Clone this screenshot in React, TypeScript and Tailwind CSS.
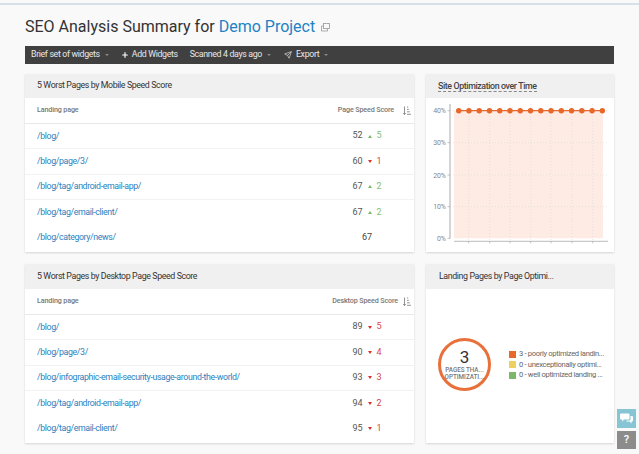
import { Plus, Send } from "lucide-react";

type Row = { page: string; score: number; dir?: "up" | "down"; delta?: number };

const mobileRows: Row[] = [
  { page: "/blog/", score: 52, dir: "up", delta: 5 },
  { page: "/blog/page/3/", score: 60, dir: "down", delta: 1 },
  { page: "/blog/tag/android-email-app/", score: 67, dir: "up", delta: 2 },
  { page: "/blog/tag/email-client/", score: 67, dir: "up", delta: 2 },
  { page: "/blog/category/news/", score: 67 },
];

const desktopRows: Row[] = [
  { page: "/blog/", score: 89, dir: "down", delta: 5 },
  { page: "/blog/page/3/", score: 90, dir: "down", delta: 4 },
  { page: "/blog/infographic-email-security-usage-around-the-world/", score: 93, dir: "down", delta: 3 },
  { page: "/blog/tag/android-email-app/", score: 94, dir: "down", delta: 2 },
  { page: "/blog/tag/email-client/", score: 95, dir: "down", delta: 1 },
];

function Caret() {
  return <span className="ml-[5px] inline-block h-0 w-0 border-x-[2.5px] border-t-[2.5px] border-x-transparent border-t-[#8a8a8a]" />;
}

function Delta({ row }: { row: Row }) {
  if (!row.dir) return null;
  const up = row.dir === "up";
  return (
    <span className="ml-[5px] flex items-center gap-[5px]">
      {up ? (
        <span className="h-0 w-0 border-x-[2.5px] border-b-[3px] border-x-transparent border-b-[#7cb866]" />
      ) : (
        <span className="h-0 w-0 border-x-[2.5px] border-t-[3px] border-x-transparent border-t-[#d9322e]" />
      )}
      <span className={up ? "w-[5px] text-[#86bd6f]" : "w-[5px] text-[#d9453f]"}>{row.delta}</span>
    </span>
  );
}

function SortIcon() {
  return (
    <svg width="8" height="9" viewBox="0 0 8 9" className="ml-[5px] shrink-0" fill="none" stroke="#777" strokeWidth="0.8">
      <path d="M1.5 0.5V8.5M0.3 7L1.5 8.6L2.7 7" />
      <path d="M4 1H5.2M4 3.4H5.8M4 5.8H6.8M4 8.3H8" />
    </svg>
  );
}

function TableCard({ title, column, rows, titleH, colGap }: { title: string; column: string; rows: Row[]; titleH: string; colGap: string }) {
  return (
    <div className="bg-white shadow-[0_1px_2px_rgba(0,0,0,0.15)]">
      <div className={`flex items-center bg-[#f0f0f0] pl-[12px] text-[8.8px] tracking-[-0.38px] text-[#333] ${titleH}`}>{title}</div>
      <div className="flex h-[26px] items-center border-b border-[#e8e8e8] pl-[12px] pr-[3px] text-[7.2px] font-medium tracking-[-0.15px] text-[#777]">
        <span>Landing page</span>
        <span className={`ml-auto ${colGap}`}>{column}</span>
        <SortIcon />
      </div>
      {rows.map((row, i) => (
        <div key={row.page} className={`flex h-[25.3px] items-center pl-[12px] text-[8.8px] tracking-[-0.38px] ${i < rows.length - 2 ? "border-b border-[#f2f2f2]" : ""}`}>
          <a className="text-[#2b7fc0]">{row.page}</a>
          <div className="ml-auto flex w-[94px] justify-center text-[9px] tracking-normal text-[#555]">
            {row.dir ? (
              <span className="flex items-center">
                <span>{row.score}</span>
                <Delta row={row} />
              </span>
            ) : (
              <span className="text-[#444]">{row.score}</span>
            )}
          </div>
        </div>
      ))}
    </div>
  );
}

function OptimizationChart() {
  const points = Array.from({ length: 15 }, (_, i) => 32.7 + i * 10.26);
  const grid = [42.7, 63.7, 84, 104.7, 125, 146, 166.7];
  const ticks = [
    { label: "40%", y: 12.7 },
    { label: "30%", y: 44.7 },
    { label: "20%", y: 77 },
    { label: "10%", y: 108.7 },
    { label: "0%", y: 140.3 },
  ];
  return (
    <svg width="188" height="154" viewBox="0 0 188 154">
      <rect x="28" y="12.7" width="149" height="127.6" fill="#fdebe4" />
      {ticks.slice(0, 4).map((t) => (
        <line key={t.y} x1="24" x2="182" y1={t.y} y2={t.y} stroke="#d8d8d8" strokeWidth="0.6" strokeDasharray="1 2" />
      ))}
      {grid.map((x) => (
        <line key={x} x1={x} x2={x} y1="6" y2="143" stroke="#d8d8d8" strokeWidth="0.6" strokeDasharray="1 2" />
      ))}
      <line x1="24" x2="24" y1="6" y2="140.5" stroke="#aaa" />
      <line x1="28" x2="182" y1="143.3" y2="143.3" stroke="#bbb" />
      {ticks.map((t) => (
        <g key={t.label}>
          <line x1="21.5" x2="24" y1={t.y} y2={t.y} stroke="#aaa" strokeWidth="0.7" />
          <text x="19.7" y={t.y + 2.5} textAnchor="end" fontSize="7" letterSpacing="-0.2" fill="#888" fontFamily="Roboto, sans-serif">{t.label}</text>
        </g>
      ))}
      {grid.map((x) => (
        <line key={x} x1={x} x2={x} y1="143.3" y2="145.3" stroke="#aaa" strokeWidth="0.7" />
      ))}
      <line x1="32.7" x2="176.3" y1="12.7" y2="12.7" stroke="#e8672a" strokeWidth="1.2" />
      {points.map((x) => (
        <circle key={x} cx={x} cy="12.7" r="2.7" fill="#e8672a" />
      ))}
    </svg>
  );
}

function Legend({ color, text }: { color: string; text: string }) {
  return (
    <div className="flex h-[10.5px] items-center gap-[3px] whitespace-nowrap">
      <span className={`h-[7px] w-[7px] shrink-0 ${color}`} />
      <span>{text}</span>
    </div>
  );
}

export default function App() {
  return (
    <div className="relative h-[454px] w-[639px] overflow-hidden bg-[#f9f9f9] font-['Roboto',sans-serif]">
      <div className="mt-[3px] h-[2px] bg-[#d5e0e8]" />
      {/* Title */}
      <div className="flex h-[41px] items-center pl-[25px] pt-[2px] text-[16px] text-[#333]">
        <span>SEO Analysis Summary for</span>
        <span className="ml-[4px] text-[#2382c4]">Demo Project</span>
        <svg width="9" height="9" viewBox="0 0 9 9" className="ml-[6px] mt-[1px]" fill="none" stroke="#999" strokeWidth="0.8">
          <rect x="2.5" y="0.5" width="6" height="5" />
          <path d="M2.5 3H0.5V8H6.5V5.5" />
        </svg>
      </div>

      {/* Toolbar */}
      <div className="ml-[25px] flex h-[18px] w-[589px] items-center bg-[#404040] pl-[6px] text-[8.8px] tracking-[-0.35px] text-[#e8e8e8]">
        <span>Brief set of widgets</span>
        <Caret />
        <Plus size={8} strokeWidth={3.5} className="ml-[12px] mr-[3px] text-white" />
        <span>Add Widgets</span>
        <span className="ml-[12px]">Scanned 4 days ago</span>
        <Caret />
        <Send size={8} className="ml-[13px] mr-[4px] text-[#ddd]" />
        <span>Export</span>
        <Caret />
      </div>

      {/* Widgets */}
      <div className="ml-[25px] mt-[10px] grid w-[589px] grid-cols-[389px_188px] gap-x-[12px] gap-y-[12px]">
        <TableCard title="5 Worst Pages by Mobile Speed Score" column="Page Speed Score" rows={mobileRows} titleH="h-[24px]" colGap="mr-[4px]" />

        <div className="bg-white shadow-[0_1px_2px_rgba(0,0,0,0.15)]">
          <div className="flex h-[24px] items-center bg-[#f0f0f0] pl-[12px] text-[8.8px] font-medium tracking-[-0.38px] text-[#444]">
            <span className="border-b border-dashed border-[#888] leading-[10px]">Site Optimization over Time</span>
          </div>
          <OptimizationChart />
        </div>

        <TableCard title="5 Worst Pages by Desktop Page Speed Score" column="Desktop Speed Score" rows={desktopRows} titleH="h-[25px]" colGap="mr-0" />

        <div className="bg-white shadow-[0_1px_2px_rgba(0,0,0,0.15)]">
          <div className="flex h-[25px] items-center bg-[#f0f0f0] pl-[13px] text-[8.8px] tracking-[-0.38px] text-[#333]">Landing Pages by Page Optimi...</div>
          <div className="flex h-[154px] items-center pb-[3px] pl-[12px]">
            <div className="flex h-[53px] w-[53px] shrink-0 flex-col items-center justify-center rounded-full border-[3px] border-[#e8703a] text-center">
              <span className="text-[17px] leading-[16px] text-[#333]">3</span>
              <span className="mt-[2px] text-[6.3px] font-medium leading-[7px] text-[#777]">PAGES THA...</span>
              <span className="text-[6.3px] font-medium leading-[7px] text-[#777]">OPTIMIZATI...</span>
            </div>
            <div className="ml-[18px] text-[7.6px] tracking-[-0.33px] text-[#666]">
              <Legend color="bg-[#e8672a]" text="3 - poorly optimized landin..." />
              <Legend color="bg-[#ecd060]" text="0 - unexceptionally optimi..." />
              <Legend color="bg-[#7cb866]" text="0 - well optimized landing ..." />
            </div>
          </div>
        </div>
      </div>

      {/* Floating buttons */}
      <div className="absolute left-[617px] top-[409px] flex h-[19px] w-[19px] items-center justify-center bg-[#86c5d4]">
        <svg width="13" height="11" viewBox="0 0 13 11" fill="white">
          <path d="M1 0.5H8.5A1 1 0 0 1 9.5 1.5V5.5A1 1 0 0 1 8.5 6.5H4L2 8.5V6.5H1A1 1 0 0 1 0 5.5V1.5A1 1 0 0 1 1 0.5Z" />
          <path d="M10.5 3H12A1 1 0 0 1 13 4V7.5A1 1 0 0 1 12 8.5H11.5V10.5L9.5 8.5H6L7 7.5H9.5A1 1 0 0 0 10.5 6.5Z" />
        </svg>
      </div>
      <div className="absolute left-[617px] top-[431px] flex h-[18px] w-[19px] items-center justify-center bg-[#8c8c8c] text-[11px] font-medium text-white">?</div>
    </div>
  );
}
